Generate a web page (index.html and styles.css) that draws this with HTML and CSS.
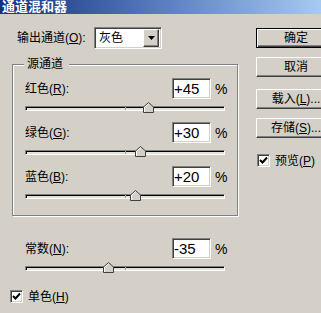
FILE: index.html
```html
<!DOCTYPE html>
<html lang="zh-CN">

<head>
    <meta charset="UTF-8">
    <title>通道混和器</title>
    <link rel="stylesheet" href="styles.css">
</head>

<body>
    <div class="title">通道混和器</div>
    <div class="content">
        <div class="left">
            <div class="out-row">
                <span class="out-label">输出通道(<u>O</u>):</span>
                <div class="combo">
                    <span class="combo-text">灰色</span>
                    <span class="combo-btn"><svg width="7" height="4" viewBox="0 0 7 4"><polygon points="0,0 7,0 3.5,4" fill="#000"/></svg></span>
                </div>
            </div>

            <fieldset class="group">
                <legend>源通道</legend>
                <div class="chan">
                    <div class="chan-row"><span class="chan-label">红色(<u>R</u>):</span><span class="field">+45</span><span class="pct">%</span></div>
                    <div class="slider"><div class="track"><i class="tick"></i></div><svg class="thumb" style="left: 61.25%" width="11" height="11" viewBox="0 0 11 11"><polygon points="0.5,10.5 0.5,5 5.5,0.5 10.5,5 10.5,10.5" fill="#d4d0c8" stroke="#404040"/><polyline points="1.5,10 1.5,5.4 5.5,1.8" fill="none" stroke="#fff"/></svg></div>
                </div>
                <div class="chan">
                    <div class="chan-row"><span class="chan-label">绿色(<u>G</u>):</span><span class="field">+30</span><span class="pct">%</span></div>
                    <div class="slider"><div class="track"><i class="tick"></i></div><svg class="thumb" style="left: 57.5%" width="11" height="11" viewBox="0 0 11 11"><polygon points="0.5,10.5 0.5,5 5.5,0.5 10.5,5 10.5,10.5" fill="#d4d0c8" stroke="#404040"/><polyline points="1.5,10 1.5,5.4 5.5,1.8" fill="none" stroke="#fff"/></svg></div>
                </div>
                <div class="chan">
                    <div class="chan-row"><span class="chan-label">蓝色(<u>B</u>):</span><span class="field">+20</span><span class="pct">%</span></div>
                    <div class="slider"><div class="track"><i class="tick"></i></div><svg class="thumb" style="left: 55%" width="11" height="11" viewBox="0 0 11 11"><polygon points="0.5,10.5 0.5,5 5.5,0.5 10.5,5 10.5,10.5" fill="#d4d0c8" stroke="#404040"/><polyline points="1.5,10 1.5,5.4 5.5,1.8" fill="none" stroke="#fff"/></svg></div>
                </div>
            </fieldset>

            <div class="chan const">
                <div class="chan-row"><span class="chan-label">常数(<u>N</u>):</span><span class="field">-35</span><span class="pct">%</span></div>
                <div class="slider"><div class="track"><i class="tick"></i></div><svg class="thumb" style="left: 41.25%" width="11" height="11" viewBox="0 0 11 11"><polygon points="0.5,10.5 0.5,5 5.5,0.5 10.5,5 10.5,10.5" fill="#d4d0c8" stroke="#404040"/><polyline points="1.5,10 1.5,5.4 5.5,1.8" fill="none" stroke="#fff"/></svg></div>
            </div>

            <div class="check mono">
                <span class="box"><svg width="9" height="9" viewBox="0 0 9 9"><polyline points="1,4 3.5,6.5 8,1.5" fill="none" stroke="#000" stroke-width="2"/></svg></span>
                <span>单色(<u>H</u>)</span>
            </div>
        </div>

        <div class="right">
            <div class="btn default">确定</div>
            <div class="btn">取消</div>
            <div class="btn gap">载入(<u>L</u>)...</div>
            <div class="btn">存储(<u>S</u>)...</div>
            <div class="check preview">
                <span class="box"><svg width="9" height="9" viewBox="0 0 9 9"><polyline points="1,4 3.5,6.5 8,1.5" fill="none" stroke="#000" stroke-width="2"/></svg></span>
                <span>预览(<u>P</u>)</span>
            </div>
        </div>
    </div>
</body>

</html>
```

FILE: styles.css
```css
/* reset start */
* {
    padding: 0;
    margin: 0;
    box-sizing: border-box;
}

html,
body {
    width: 321px;
    height: 313px;
    overflow: hidden;
}

body {
    background-color: #d4d0c8;
    font-family: "Liberation Sans", "Noto Sans CJK SC", sans-serif;
    font-size: 12px;
    line-height: 14px;
    color: #000;
}

u {
    text-decoration: underline;
    text-underline-offset: 1px;
}

/* reset end */


/* title start */
.title {
    height: 14px;
    padding-left: 2px;
    line-height: 13px;
    font-size: 13px;
    font-weight: bold;
    color: #fff;
    background: linear-gradient(to right, #12307c, #5a7cc0 50%, #a6caf0);
}

/* title end */


/* structure start */
.content {
    display: grid;
    grid-template-columns: 256px 80px;
}

.out-row {
    display: flex;
    align-items: center;
    height: 22px;
    margin-top: 13px;
    padding-left: 17px;
}

.out-label {
    width: 77px;
}

.combo {
    display: flex;
    align-items: center;
    justify-content: space-between;
    width: 68px;
    height: 22px;
    padding: 0 2px 0 4px;
    background-color: #fff;
    border: 1px solid;
    border-color: #808080 #fff #fff #808080;
    box-shadow: inset 1px 1px 0 #404040, inset -1px -1px 0 #d4d0c8;
}

.combo-btn {
    display: flex;
    align-items: center;
    justify-content: center;
    width: 16px;
    height: 18px;
    background-color: #d4d0c8;
    border: 1px solid;
    border-color: #fff #404040 #404040 #fff;
    box-shadow: inset -1px -1px 0 #808080;
}

.group {
    width: 226px;
    margin: 9px 0 0 12px;
    padding: 7px 0 12px 12px;
    border: 1px solid #808080;
    box-shadow: 1px 1px 0 #fff, inset 1px 1px 0 #fff;
}

.group legend {
    margin-left: -1px;
    padding: 0 6px 0 3px;
    line-height: 13px;
    background-color: #d4d0c8;
}

.chan+.chan {
    margin-top: 7px;
}

.chan-row {
    display: flex;
    align-items: center;
    height: 21px;
}

.chan-label {
    width: 147px;
}

.field {
    width: 39px;
    height: 21px;
    padding-left: 1px;
    font-size: 15px;
    line-height: 19px;
    background-color: #fff;
    border: 1px solid;
    border-color: #808080 #fff #fff #808080;
    box-shadow: inset 1px 1px 0 #404040, inset -1px -1px 0 #d4d0c8;
}

.pct {
    margin-left: 4px;
    font-size: 14px;
}

.slider {
    position: relative;
    width: 200px;
    height: 16px;
    padding-top: 7px;
}

.track {
    position: relative;
    height: 5px;
    background-color: #e4e2dc;
    border: 1px solid;
    border-color: #808080 #fff #fff #808080;
    box-shadow: inset 1px 1px 0 #000;
}

.tick {
    position: absolute;
    left: 50%;
    top: 0;
    width: 1px;
    height: 3px;
    background-color: #a0a0a0;
}

.thumb {
    position: absolute;
    top: 3px;
    margin-left: -5px;
    display: block;
}

.const {
    margin: 22px 0 0 25px;
}

.check {
    display: flex;
    align-items: center;
    gap: 5px;
    height: 13px;
}

.mono {
    margin: 15px 0 0 10px;
}

.box {
    display: flex;
    align-items: center;
    justify-content: center;
    width: 13px;
    height: 13px;
    background-color: #fff;
    border: 1px solid;
    border-color: #808080 #fff #fff #808080;
    box-shadow: inset 1px 1px 0 #404040, inset -1px -1px 0 #d4d0c8;
}

.right {
    padding-top: 14px;
}

.btn {
    width: 80px;
    height: 20px;
    line-height: 18px;
    text-align: center;
    white-space: nowrap;
    border: 1px solid;
    border-color: #fff #404040 #404040 #fff;
    box-shadow: inset -1px -1px 0 #808080;
}

.btn+.btn {
    margin-top: 9px;
}

.btn.gap {
    margin-top: 12px;
}

.btn.default {
    border-color: #000;
    box-shadow: inset 1px 1px 0 #fff, inset -1px -1px 0 #404040, inset -2px -2px 0 #808080;
}

.preview {
    margin: 16px 0 0 1px;
}

/* structure end */
```
